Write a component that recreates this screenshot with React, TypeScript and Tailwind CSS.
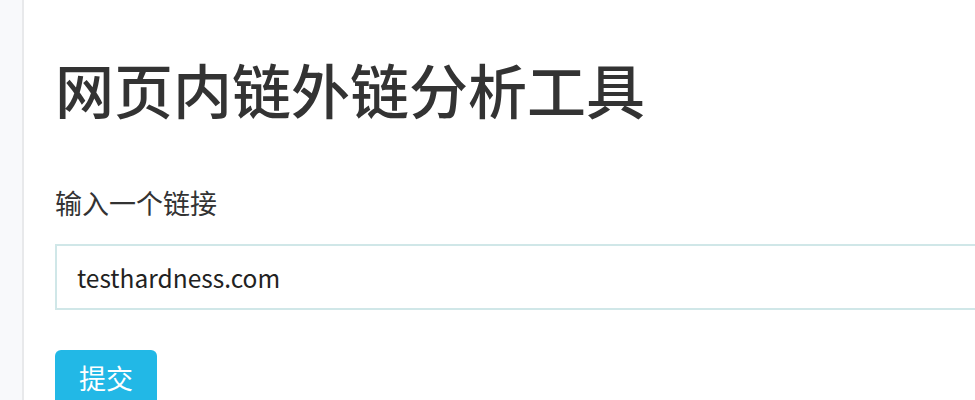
export default function App() {
  return (
    <div
      className="flex h-[400px] w-[975px] overflow-hidden bg-white text-[#333]"
      style={{ fontFamily: '"Noto Sans CJK SC", "Noto Sans", sans-serif' }}
    >
      {/* side strip */}
      <div className="w-[24px] shrink-0 border-r-2 border-[#e8e9eb] bg-[#f8f9fb]" />

      <main className="flex min-w-0 flex-1 flex-col pl-[31px] pt-[59px]">
        <h1 className="text-[59px] leading-none font-medium text-[#333]">网页内链外链分析工具</h1>

        <label className="mt-[71px] text-[27px] leading-none text-[#333]">输入一个链接</label>

        <input
          type="text"
          defaultValue="testhardness.com"
          className="mt-[28px] h-[66px] w-[1000px] shrink-0 border-2 border-[#d0e7e8] bg-white px-[20px] text-[24.5px] text-[#222] outline-none"
        />

        <div className="mt-[40px]">
          <button className="h-[60px] rounded-[6px] bg-[#22b8e6] px-[24px] pb-[6px] text-[27px] leading-none text-white">
            提交
          </button>
        </div>
      </main>
    </div>
  )
}
